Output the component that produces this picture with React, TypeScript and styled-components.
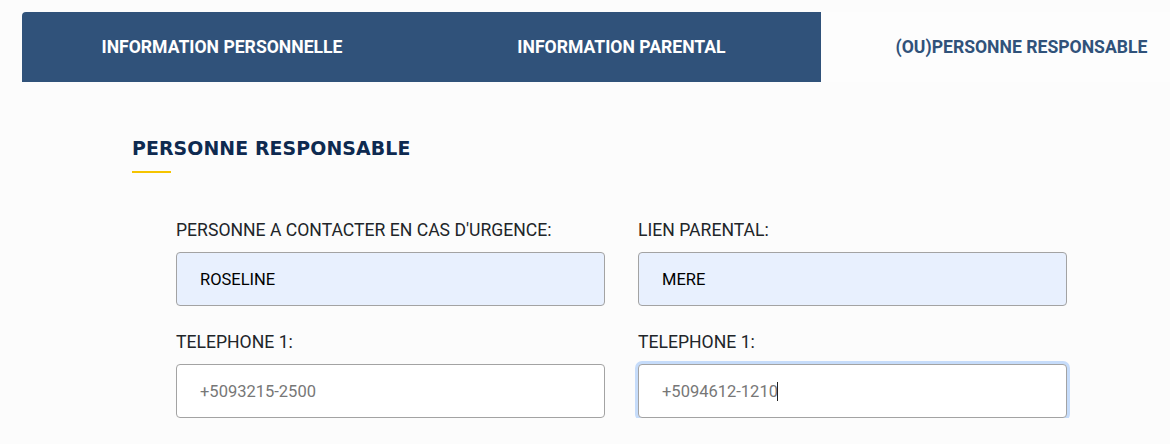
import React from "react";
import styled, { createGlobalStyle } from "styled-components";

const GlobalStyle = createGlobalStyle`
  html, body {
    margin: 0;
    padding: 0;
    background: #fcfcfc;
    overflow: hidden;
    font-family: Roboto, "Liberation Sans", sans-serif;
  }
`;

const Page = styled.div`
  padding: 12px 0 0 22px;
  width: 1200px;
`;

const TabBar = styled.div`
  display: grid;
  grid-template-columns: 400px 399px 401px;
  height: 70px;
  background: #30527a;
  border-top-left-radius: 4px;
`;

const Tab = styled.div<{ $active?: boolean }>`
  display: flex;
  align-items: center;
  justify-content: center;
  font-family: Roboto, "Liberation Sans", sans-serif;
  font-weight: 700;
  font-size: 17.6px;
  color: ${(p) => (p.$active ? "#30527a" : "#ffffff")};
  background: ${(p) => (p.$active ? "#fdfdfd" : "transparent")};
`;

const Content = styled.div`
  padding: 54px 0 0 110px;
`;

const Heading = styled.h2`
  margin: 0;
  font-family: "DejaVu Sans", "Noto Sans", sans-serif;
  font-weight: 700;
  font-size: 18.9px;
  line-height: 24px;
  color: #0e2a50;
  letter-spacing: 0.1px;
`;

const Underline = styled.div`
  width: 39px;
  height: 2px;
  background: #f5c400;
  margin-top: 11px;
`;

const Form = styled.div`
  display: grid;
  grid-template-columns: 429px 429px;
  column-gap: 33px;
  row-gap: 24px;
  margin: 45px 0 0 44px;
`;

const Field = styled.div`
  display: flex;
  flex-direction: column;
`;

const Label = styled.label`
  font-size: 17.6px;
  line-height: 24px;
  color: #212529;
  margin-bottom: 10px;
`;

const InputWrap = styled.div`
  position: relative;
`;

const Input = styled.input<{ $filled?: boolean; $focused?: boolean }>`
  box-sizing: border-box;
  width: 100%;
  height: 54px;
  padding: 0 23px;
  font-family: Roboto, "Liberation Sans", sans-serif;
  font-size: 16.5px;
  border: 1px solid #a3a3a3;
  border-radius: 4px;
  outline: none;
  background: ${(p) => (p.$filled ? "#e8f0fe" : "#ffffff")};
  color: ${(p) => (p.$filled ? "#000000" : "#777777")};
  box-shadow: ${(p) => (p.$focused ? "0 0 0 3px #c6dcfa" : "none")};
`;

const Caret = styled.span`
  position: absolute;
  top: 18px;
  width: 1px;
  height: 19px;
  background: #222;
`;

const fields = [
  { label: "PERSONNE A CONTACTER EN CAS D'URGENCE:", value: "ROSELINE", filled: true },
  { label: "LIEN PARENTAL:", value: "MERE", filled: true },
  { label: "TELEPHONE 1:", value: "+5093215-2500" },
  { label: "TELEPHONE 1:", value: "+5094612-1210", focused: true, caret: 139 },
];

export default function App() {
  return (
    <>
      <GlobalStyle />
      <Page>
        <TabBar>
          <Tab>INFORMATION PERSONNELLE</Tab>
          <Tab>INFORMATION PARENTAL</Tab>
          <Tab $active>(OU)PERSONNE RESPONSABLE</Tab>
        </TabBar>
        <Content>
          <Heading>PERSONNE RESPONSABLE</Heading>
          <Underline />
          <Form>
            {fields.map((f, i) => (
              <Field key={i}>
                <Label>{f.label}</Label>
                <InputWrap>
                  <Input
                    readOnly
                    value={f.value}
                    $filled={f.filled}
                    $focused={f.focused}
                  />
                  {f.caret !== undefined && <Caret style={{ left: f.caret }} />}
                </InputWrap>
              </Field>
            ))}
          </Form>
        </Content>
      </Page>
    </>
  );
}
